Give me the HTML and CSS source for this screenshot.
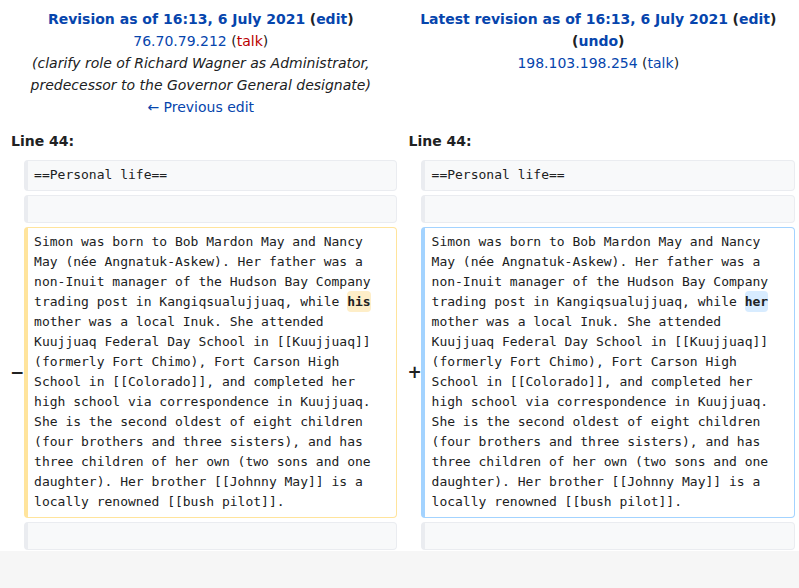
FILE: index.html
```html
<!DOCTYPE html>
<html>
<head>
<meta charset="utf-8">
<link rel="stylesheet" href="styles.css">
</head>
<body>
<div class="page">
<table class="diff">
  <colgroup>
    <col class="col-marker">
    <col class="col-content">
    <col class="col-marker">
    <col class="col-content">
  </colgroup>
  <tr class="titles">
    <td colspan="2" class="title">
      <div><a class="strong" href="#">Revision as of 16:13, 6 July 2021</a> <span class="strong">(<a href="#">edit</a>)</span></div>
      <div><a href="#">76.70.79.212</a> (<a class="new" href="#">talk</a>)</div>
      <div class="comment">(clarify role of Richard Wagner as Administrator, predecessor to the Governor General designate)</div>
      <div><a href="#">← Previous edit</a></div>
    </td>
    <td colspan="2" class="title">
      <div><a class="strong" href="#">Latest revision as of 16:13, 6 July 2021</a> <span class="strong">(<a href="#">edit</a>)</span></div>
      <div class="strong">(<a href="#">undo</a>)</div>
      <div><a href="#">198.103.198.254</a> (<a href="#">talk</a>)</div>
    </td>
  </tr>
  <tr>
    <td colspan="2" class="lineno">Line 44:</td>
    <td colspan="2" class="lineno">Line 44:</td>
  </tr>
  <tr>
    <td class="marker"></td>
    <td class="line context">==Personal life==</td>
    <td class="marker"></td>
    <td class="line context">==Personal life==</td>
  </tr>
  <tr>
    <td class="marker"></td>
    <td class="line context"><div class="blank"></div></td>
    <td class="marker"></td>
    <td class="line context"><div class="blank"></div></td>
  </tr>
  <tr>
    <td class="marker">−</td>
    <td class="line deleted">Simon was born to Bob Mardon May and Nancy May (née Angnatuk-Askew). Her father was a non-Inuit manager of the Hudson Bay Company trading post in Kangiqsualujjuaq, while <del class="chg">his</del> mother was a local Inuk. She attended Kuujjuaq Federal Day School in [[Kuujjuaq]] (formerly Fort Chimo), Fort Carson High School in [[Colorado]], and completed her high school via correspondence in Kuujjuaq. She is the second oldest of eight children (four brothers and three sisters), and has three children of her own (two sons and one daughter). Her brother [[Johnny May]] is a locally renowned [[bush pilot]].</td>
    <td class="marker">+</td>
    <td class="line added">Simon was born to Bob Mardon May and Nancy May (née Angnatuk-Askew). Her father was a non-Inuit manager of the Hudson Bay Company trading post in Kangiqsualujjuaq, while <ins class="chg">her</ins> mother was a local Inuk. She attended Kuujjuaq Federal Day School in [[Kuujjuaq]] (formerly Fort Chimo), Fort Carson High School in [[Colorado]], and completed her high school via correspondence in Kuujjuaq. She is the second oldest of eight children (four brothers and three sisters), and has three children of her own (two sons and one daughter). Her brother [[Johnny May]] is a locally renowned [[bush pilot]].</td>
  </tr>
  <tr>
    <td class="marker"></td>
    <td class="line context"><div class="blank"></div></td>
    <td class="marker"></td>
    <td class="line context"><div class="blank"></div></td>
  </tr>
</table>
</div>
</body>
</html>
```

FILE: styles.css
```css
html, body {
  margin: 0;
  padding: 0;
}
body {
  background: #f6f6f6;
  font-family: "DejaVu Sans", sans-serif;
  font-size: 14px;
  color: #202122;
}
.page {
  background: #ffffff;
  overflow: hidden;
}
.diff {
  width: 100%;
  table-layout: fixed;
  border-spacing: 4px;
  border-collapse: separate;
  margin-bottom: -3px;
}
.col-marker { width: 2%; }
.col-content { width: 48%; }
.diff td {
  padding: 4px 7px;
}
a {
  color: #0645ad;
  text-decoration: none;
}
a.new {
  color: #ba0000;
}
.strong {
  font-weight: bold;
}
.title {
  text-align: center;
  vertical-align: top;
  line-height: 22px;
}
.comment {
  font-style: italic;
}
.lineno {
  font-weight: bold;
  line-height: 22px;
}
.diff td.marker {
  padding: 0 0 0 6px;
  text-align: left;
  vertical-align: middle;
  font-weight: bold;
  font-size: 17px;
  white-space: nowrap;
  overflow: visible;
}
.diff td.line {
  font-family: "DejaVu Sans Mono", monospace;
  font-size: 13px;
  line-height: 20px;
  padding: 0.33em 0.5em;
  white-space: pre-wrap;
  word-wrap: break-word;
  vertical-align: top;
  border-style: solid;
  border-width: 1px 1px 1px 4px;
  border-radius: 4px;
  color: #202122;
}
.blank {
  height: 18px;
}
.context {
  background: #f8f9fa;
  border-color: #eaecf0;
}
.deleted {
  background: #ffffff;
  border-color: #ffe49c;
}
.added {
  background: #ffffff;
  border-color: #a3d3ff;
}
.chg {
  text-decoration: none;
  font-weight: bold;
  border-radius: 4px;
  padding: 3px 0;
}
del.chg {
  background: #feeec8;
}
ins.chg {
  background: #d8ecff;
}
```
